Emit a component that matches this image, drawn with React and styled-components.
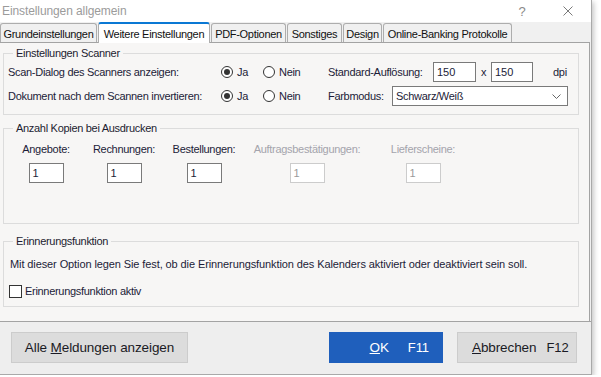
import React from 'react';
import styled, { createGlobalStyle } from 'styled-components';

const GlobalStyle = createGlobalStyle`
  html, body {
    margin: 0;
    padding: 0;
    background: #ffffff;
  }
  body {
    font-family: "Liberation Sans", Arial, sans-serif;
  }
  * {
    box-sizing: border-box;
  }
`;

const Dialog = styled.div`
  width: 592px;
  height: 375px;
  display: flex;
  flex-direction: column;
  background: #f0f0f0;
  border-right: 1px solid #a9a9a9;
  border-bottom: 1px solid #a9a9a9;
  box-shadow: 2px 2px 5px rgba(0, 0, 0, 0.22);
`;

const TitleBar = styled.div`
  height: 22px;
  display: flex;
  align-items: center;
  background: #ffffff;
  padding-left: 2px;
`;

const Title = styled.div`
  flex: 1;
  font-size: 12px;
  color: #9b9b9b;
  letter-spacing: -0.1px;
`;

const TitleButton = styled.div`
  width: 46px;
  height: 22px;
  display: flex;
  align-items: center;
  justify-content: center;
  color: #8a8a8a;
  font-size: 13px;
`;

const TabStrip = styled.div`
  height: 20px;
  display: flex;
  align-items: flex-end;
  gap: 1px;
  background: #f0f0f0;
  position: relative;
  z-index: 1;
`;

const Tab = styled.div`
  width: ${p => p.$w}px;
  height: ${p => (p.$active ? 21 : 19)}px;
  margin-bottom: ${p => (p.$active ? -1 : 0)}px;
  display: flex;
  align-items: center;
  justify-content: center;
  padding-top: ${p => (p.$active ? 0 : 1)}px;
  border: 1px solid #adadad;
  border-top: ${p => (p.$active ? '2px solid #0a78d4' : '1px solid #adadad')};
  border-bottom: none;
  border-radius: 3px 3px 0 0;
  background: ${p => (p.$active ? '#ffffff' : '#f0f0f0')};
  font-size: 11px;
  letter-spacing: -0.3px;
  color: #111111;
  white-space: nowrap;
`;

const Panel = styled.div`
  flex: 1;
  width: 590px;
  display: flex;
  flex-direction: column;
  background: #f7f6f5;
  border-top: 1px solid #a3a3a3;
  border-right: 1px solid #a3a3a3;
  padding: 3px 10px 0 3px;
`;

const Group = styled.fieldset`
  margin: ${p => p.$top || 0}px 0 0 0;
  padding: 0 4px ${p => p.$bottom || 0}px 4px;
  border: 1px solid #dcdcdc;
  min-width: 0;
`;

const Legend = styled.legend`
  margin-left: 5px;
  padding: 0 3px;
  font-size: 11px;
  line-height: 14px;
  letter-spacing: -0.3px;
  color: #1c1c30;
`;

const Row = styled.div`
  height: 24px;
  display: flex;
  align-items: center;
`;

const Label = styled.div`
  width: ${p => (p.$w ? `${p.$w}px` : 'auto')};
  flex-shrink: 0;
  margin-left: ${p => p.$ml || 0}px;
  font-size: 11px;
  letter-spacing: -0.3px;
  color: ${p => (p.$disabled ? '#a4a4ac' : '#1c1c38')};
  white-space: nowrap;
`;

const RadioOption = styled.label`
  width: ${p => p.$w}px;
  display: flex;
  align-items: center;
  gap: 4px;
  font-size: 11px;
  letter-spacing: -0.3px;
  color: #1c1c38;
`;

const RadioCircle = styled.span`
  width: 12px;
  height: 12px;
  border-radius: 50%;
  border: 1px solid #333333;
  background: #ffffff;
  display: flex;
  align-items: center;
  justify-content: center;
  &::after {
    content: '';
    width: 6px;
    height: 6px;
    border-radius: 50%;
    background: ${p => (p.$checked ? '#333333' : 'transparent')};
  }
`;

const TextBox = styled.div`
  width: ${p => p.$w}px;
  height: 20px;
  flex-shrink: 0;
  margin-left: ${p => p.$ml || 0}px;
  display: flex;
  align-items: center;
  padding-left: 3px;
  background: #ffffff;
  border: 1px solid ${p => (p.$disabled ? '#cccccc' : '#7a7a7a')};
  font-size: 11px;
  color: ${p => (p.$disabled ? '#9a9a9a' : '#1c1c38')};
`;

const Select = styled.div`
  width: 176px;
  height: 20px;
  display: flex;
  align-items: center;
  justify-content: space-between;
  padding: 0 6px 0 3px;
  background: #ffffff;
  border: 1px solid #7a7a7a;
  font-size: 11px;
  letter-spacing: -0.3px;
  color: #1c1c38;
`;

const CopiesGrid = styled.div`
  display: grid;
  grid-template-columns: 76px 80px 80px 126px 106px;
  grid-template-rows: 14px 20px;
  row-gap: 7px;
  margin-top: 7px;
  justify-items: center;
  align-items: center;
`;

const CopyLabel = styled.div`
  font-size: 11px;
  line-height: 14px;
  letter-spacing: -0.3px;
  color: ${p => (p.$disabled ? '#a4a4ac' : '#1c1c38')};
  white-space: nowrap;
`;

const Info = styled.div`
  margin: 9px 0 0 2px;
  font-size: 11px;
  line-height: 14px;
  letter-spacing: -0.1px;
  color: #1c1c38;
  white-space: nowrap;
`;

const CheckRow = styled.label`
  margin: 13px 0 0 1px;
  height: 14px;
  display: flex;
  align-items: center;
  gap: 3px;
  font-size: 11px;
  letter-spacing: -0.3px;
  color: #1c1c38;
`;

const CheckBox = styled.span`
  width: 13px;
  height: 13px;
  border: 1px solid #333333;
  background: #ffffff;
`;

const Footer = styled.div`
  height: 53px;
  width: 591px;
  display: flex;
  align-items: flex-start;
  padding: 10px 14px 0 11px;
  background: #eeeeee;
  border-top: 1px solid #a3a3a3;
`;

const Button = styled.div`
  width: ${p => p.$w}px;
  height: 31px;
  margin-left: ${p => (p.$auto ? 'auto' : `${p.$ml || 0}px`)};
  display: flex;
  align-items: center;
  justify-content: ${p => p.$justify || 'center'};
  gap: ${p => p.$gap || 0}px;
  padding: ${p => p.$pad || '0'};
  background: ${p => (p.$primary ? '#1f5fbc' : '#dcdcdc')};
  border: 1px solid ${p => (p.$primary ? '#1f5fbc' : '#cccccc')};
  color: ${p => (p.$primary ? '#ffffff' : '#1a1a24')};
  font-size: 13.5px;
  letter-spacing: -0.1px;
  white-space: nowrap;
`;

const Key = styled.span`
  font-size: 13px;
`;

const Radio = ({ checked, label, w }) => (
  <RadioOption $w={w}>
    <RadioCircle $checked={checked} />
    {label}
  </RadioOption>
);

const copies = [
  { label: 'Angebote:' },
  { label: 'Rechnungen:' },
  { label: 'Bestellungen:' },
  { label: 'Auftragsbestätigungen:', disabled: true },
  { label: 'Lieferscheine:', disabled: true },
];

const tabs = [
  { label: 'Grundeinstellungen', w: 97 },
  { label: 'Weitere Einstellungen', w: 112, active: true },
  { label: 'PDF-Optionen', w: 75 },
  { label: 'Sonstiges', w: 55 },
  { label: 'Design', w: 39 },
  { label: 'Online-Banking Protokolle', w: 129 },
];

export default function App() {
  return (
    <>
      <GlobalStyle />
      <Dialog>
        <TitleBar>
          <Title>Einstellungen allgemein</Title>
          <TitleButton>?</TitleButton>
          <TitleButton>
            <svg width="10" height="10" viewBox="0 0 10 10">
              <path d="M0.5 0.5 L9.5 9.5 M9.5 0.5 L0.5 9.5" stroke="#7a7a7a" strokeWidth="1" fill="none" />
            </svg>
          </TitleButton>
        </TitleBar>

        <TabStrip>
          {tabs.map(t => (
            <Tab key={t.label} $w={t.w} $active={t.active}>{t.label}</Tab>
          ))}
        </TabStrip>

        <Panel>
          <Group $bottom={6}>
            <Legend>Einstellungen Scanner</Legend>
            <Row>
              <Label $w={213}>Scan-Dialog des Scanners anzeigen:</Label>
              <Radio checked label="Ja" w={42} />
              <Radio label="Nein" w={65} />
              <Label $w={105}>Standard-Auflösung:</Label>
              <TextBox $w={43}>150</TextBox>
              <Label $ml={5} $w={10}>x</Label>
              <TextBox $w={42}>150</TextBox>
              <Label $ml={20}>dpi</Label>
            </Row>
            <Row>
              <Label $w={213}>Dokument nach dem Scannen invertieren:</Label>
              <Radio checked label="Ja" w={42} />
              <Radio label="Nein" w={65} />
              <Label $w={64}>Farbmodus:</Label>
              <Select>
                Schwarz/Weiß
                <svg width="9" height="5" viewBox="0 0 9 5">
                  <path d="M0.5 0.5 L4.5 4.5 L8.5 0.5" stroke="#666" strokeWidth="1" fill="none" />
                </svg>
              </Select>
            </Row>
          </Group>

          <Group $top={6} $bottom={40}>
            <Legend>Anzahl Kopien bei Ausdrucken</Legend>
            <CopiesGrid>
              {copies.map(c => (
                <CopyLabel key={c.label} $disabled={c.disabled}>{c.label}</CopyLabel>
              ))}
              {copies.map(c => (
                <TextBox key={c.label} $w={35} $disabled={c.disabled}>1</TextBox>
              ))}
            </CopiesGrid>
          </Group>

          <Group $top={10} $bottom={8}>
            <Legend>Erinnerungsfunktion</Legend>
            <Info>
              Mit dieser Option legen Sie fest, ob die Erinnerungsfunktion des Kalenders aktiviert oder deaktiviert sein soll.
            </Info>
            <CheckRow>
              <CheckBox />
              Erinnerungsfunktion aktiv
            </CheckRow>
          </Group>
        </Panel>

        <Footer>
          <Button $w={177}>
            <span>Alle <u>M</u>eldungen anzeigen</span>
          </Button>
          <Button $w={114} $auto $primary $justify="flex-end" $gap={19} $pad="0 13px 0 0">
            <span><u>O</u>K</span>
            <Key>F11</Key>
          </Button>
          <Button $w={120} $ml={14} $justify="flex-start" $gap={10} $pad="0 0 0 14px">
            <span><u>A</u>bbrechen</span>
            <Key>F12</Key>
          </Button>
        </Footer>
      </Dialog>
    </>
  );
}
